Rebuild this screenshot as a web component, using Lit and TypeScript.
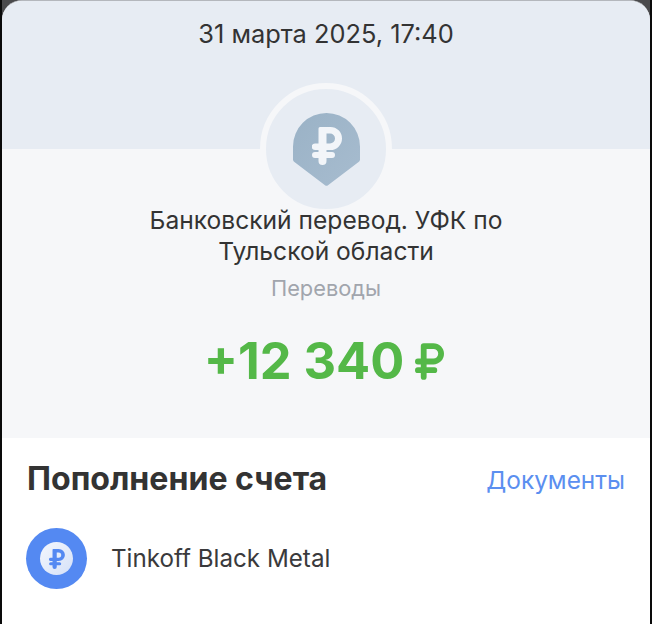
import { LitElement, html, css } from 'lit';
import { customElement } from 'lit/decorators.js';

const RUBLE = 'M8 0H18.5a11.5 11.5 0 0 1 0 23H14.5V25H20a3 3 0 0 1 0 6H14.5V34a4 4 0 0 1-8 0V31H3a3 3 0 0 1 0-6H6.5V23H3a3.25 3.25 0 0 1 0-6.5H6.5V1.5A1.5 1.5 0 0 1 8 0ZM14.5 6.5V16.5H18a5 5 0 0 0 0-10Z';
// lighter stroked version for the big amount
const RUBLE_LINE = 'M9 3H19a8 8 0 0 1 0 16H3M3 28H20M9 3V35';

@customElement('app-root')
export class AppRoot extends LitElement {
  static styles = css`
    :host {
      display: block;
      width: 652px;
      height: 624px;
      overflow: hidden;
      background: #0a0a0a;
      font-family: Inter, 'Noto Sans', sans-serif;
    }
    .frame {
      height: 624px;
      margin: 0 2px;
      background: #4a4a4c;
    }
    .sheet {
      box-sizing: border-box;
      height: 624px;
      border-top: 1px solid #b4b7bc;
      border-radius: 20px 20px 0 0;
      overflow: hidden;
      background: #fff;
    }
    .top {
      height: 148px;
      background: #e7ecf3;
      display: flex;
      flex-direction: column;
      align-items: center;
    }
    .date {
      margin-top: 18px;
      font-size: 25.4px;
      line-height: 30px;
      color: #333;
    }
    .ring {
      margin-top: 34px;
      width: 120px;
      height: 120px;
      flex: none;
      border: 6px solid #f6f7f9;
      border-radius: 50%;
      background: #e7ecf3;
      display: flex;
      justify-content: center;
      position: relative;
    }
    .pin {
      margin-top: 24px;
      width: 67px;
      height: 73px;
    }
    .info {
      height: 289px;
      background: #f6f7f9;
      display: flex;
      flex-direction: column;
      align-items: center;
    }
    .title {
      position: relative;
      margin-top: 56px;
      width: 400px;
      text-align: center;
      font-size: 24.6px;
      line-height: 31px;
      color: #333;
    }
    .cat {
      margin-top: 8px;
      font-size: 21.8px;
      line-height: 26px;
      color: #a1a5ad;
    }
    .amount {
      margin: 31px 4px 0 0;
      font-size: 50.5px;
      line-height: 58px;
      font-weight: 700;
      color: #54b848;
      display: flex;
      align-items: center;
      gap: 11px;
    }
    .amount path {
      fill: none;
      stroke: #54b848;
      stroke-width: 6;
      stroke-linecap: round;
      stroke-linejoin: round;
    }
    .bottom {
      padding: 21px 25px 0 24px;
    }
    .head {
      display: flex;
      justify-content: space-between;
      align-items: center;
      height: 40px;
    }
    h2 {
      margin: 0 0 0 1px;
      font-size: 32.1px;
      line-height: 40px;
      font-weight: 700;
      color: #333;
    }
    .docs {
      margin-top: 2px;
      font-size: 24.4px;
      line-height: 30px;
      color: #5b8ff0;
    }
    .row {
      margin-top: 29px;
      display: flex;
      align-items: center;
      gap: 24px;
    }
    .logo {
      width: 61px;
      height: 61px;
      border-radius: 50%;
      background: #5489f2;
      display: flex;
      align-items: center;
      justify-content: center;
    }
    .coin {
      width: 33px;
      height: 33px;
      border-radius: 50%;
      background: linear-gradient(135deg, #f4f7fd, #d5e1f8);
      display: flex;
      align-items: center;
      justify-content: center;
    }
    .name {
      font-size: 24.2px;
      color: #3a3a3c;
    }
  `;

  render() {
    return html`
      <div class="frame">
        <div class="sheet">
          <div class="top">
            <div class="date">31 марта 2025, 17:40</div>
            <div class="ring">
              <svg class="pin" viewBox="0 0 67 73">
                <defs>
                  <linearGradient id="pg" x1="0" y1="0" x2="1" y2="1">
                    <stop offset="0" stop-color="#9ab2c6" />
                    <stop offset="1" stop-color="#a7bccf" />
                  </linearGradient>
                </defs>
                <path d="M33.5 0A33.5 33.5 0 0 1 67 33.5V46.5a3 3 0 0 1-1.4 2.5L35 72.3a2.6 2.6 0 0 1-3 0L1.4 49A3 3 0 0 1 0 46.5V33.5A33.5 33.5 0 0 1 33.5 0Z" fill="url(#pg)" />
                <svg x="19" y="14" width="30" height="38" viewBox="0 0 30 38">
                  <path d=${RUBLE} fill="#f2f5f9" fill-rule="evenodd" />
                </svg>
              </svg>
            </div>
          </div>
          <div class="info">
            <div class="title">Банковский перевод. УФК по Тульской области</div>
            <div class="cat">Переводы</div>
            <div class="amount">
              <span>+12 340</span>
              <svg width="29" height="37" viewBox="0 0 30 38"><path d=${RUBLE_LINE} /></svg>
            </div>
          </div>
          <div class="bottom">
            <div class="head">
              <h2>Пополнение счета</h2>
              <span class="docs">Документы</span>
            </div>
            <div class="row">
              <div class="logo">
                <div class="coin">
                  <svg width="16" height="20" viewBox="0 0 30 38"><path d=${RUBLE} fill="#5489f2" fill-rule="evenodd" /></svg>
                </div>
              </div>
              <span class="name">Tinkoff Black Metal</span>
            </div>
          </div>
        </div>
      </div>
    `;
  }
}
